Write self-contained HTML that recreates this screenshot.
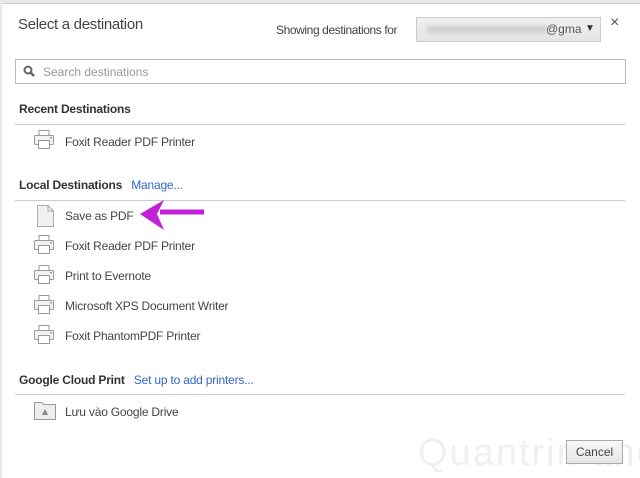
<!DOCTYPE html>
<html><head><style>
body{margin:0;width:640px;height:477px;overflow:hidden;background:#e8e8e8;font-family:"Liberation Sans",sans-serif;color:#333;position:relative}
.dlg{position:absolute;left:2px;top:3px;width:638px;height:474px;background:#fff;border-top:1px solid #ccc}
.t{position:absolute;white-space:nowrap}
.h{font-weight:bold;font-size:12px;color:#333;letter-spacing:-0.2px}
.it{font-size:12px;color:#444;letter-spacing:-0.2px}
.ln{position:absolute;left:15px;width:610px;height:1px;background:#ccc}
a{color:#3366cc}
</style></head><body>
<div class="dlg"></div>
<div class="t" style="left:18px;top:16px;font-size:15px;color:#444;letter-spacing:-0.3px">Select a destination</div>
<div class="t" style="left:276px;top:23px;font-size:12px;color:#444;letter-spacing:-0.4px">Showing destinations for</div>
<div style="position:absolute;left:416px;top:17px;width:183px;height:23px;border:1px solid #ccc;background:linear-gradient(#f0f0f0,#e4e4e4)"><div style="position:absolute;left:10px;top:8px;width:120px;height:7px;background:#ccc;filter:blur(2px)"></div><span class="t" style="left:129px;top:4px;font-size:12px;color:#555">@gma</span><span class="t" style="left:168px;top:5px;font-size:10px">▼</span></div>
<div class="t" style="left:610px;top:14px;font-size:16px;color:#555">×</div>
<div style="position:absolute;left:15px;top:59px;width:609px;height:23px;border:1px solid #bbb"><svg style="position:absolute;left:7px;top:5px" width="12" height="12"><circle cx="5" cy="5" r="3.5" stroke="#666" stroke-width="2" fill="none"/><path d="M7.5 7.5L11 11" stroke="#666" stroke-width="2.5"/></svg><span class="t" style="left:27px;top:5px;font-size:12px;color:#999">Search destinations</span></div>
<div class="t h" style="left:19px;top:102px">Recent Destinations</div>
<div class="ln" style="top:124px"></div>
<div class="t h" style="left:19px;top:178px">Local Destinations <a style="font-weight:normal;margin-left:6px">Manage...</a></div>
<div class="ln" style="top:200px"></div>
<div class="t h" style="left:19px;top:373px">Google Cloud Print <a style="font-weight:normal;margin-left:6px">Set up to add printers...</a></div>
<div class="ln" style="top:394px"></div>
<svg width="0" height="0" style="position:absolute"><defs><g id="pr"><rect x="5" y="0.5" width="10" height="5" fill="#fff" stroke="#999"/><rect x="0.5" y="5.5" width="19" height="9" rx="1" fill="#f3f3f3" stroke="#999"/><rect x="4.5" y="10.5" width="11" height="8" fill="#fff" stroke="#999"/><rect x="16" y="7" width="2" height="1.5" fill="#999"/></g></defs></svg>
<svg style="position:absolute;left:34px;top:130px" width="21" height="20"><use href="#pr"/></svg>
<div class="t it" style="left:65px;top:135px">Foxit Reader PDF Printer</div>
<svg style="position:absolute;left:37px;top:205px" width="18" height="22"><path d="M0.5 0.5H11L16.5 6V21.5H0.5Z" fill="#f0f0f0" stroke="#aaa"/><path d="M11 0.5V6H16.5" fill="none" stroke="#aaa"/></svg>
<div class="t it" style="left:65px;top:209px">Save as PDF</div>
<svg style="position:absolute;left:138px;top:198px" width="68" height="34"><path d="M66 14H22" stroke="#c21fd9" stroke-width="5"/><path d="M2 16L26 2L19 16L26 32Z" fill="#c21fd9"/></svg>
<svg style="position:absolute;left:34px;top:235px" width="21" height="20"><use href="#pr"/></svg>
<div class="t it" style="left:65px;top:239px">Foxit Reader PDF Printer</div>
<svg style="position:absolute;left:34px;top:265px" width="21" height="20"><use href="#pr"/></svg>
<div class="t it" style="left:65px;top:269px">Print to Evernote</div>
<svg style="position:absolute;left:34px;top:295px" width="21" height="20"><use href="#pr"/></svg>
<div class="t it" style="left:65px;top:299px">Microsoft XPS Document Writer</div>
<svg style="position:absolute;left:34px;top:325px" width="21" height="20"><use href="#pr"/></svg>
<div class="t it" style="left:65px;top:329px">Foxit PhantomPDF Printer</div>
<svg style="position:absolute;left:34px;top:400px" width="22" height="20"><path d="M0.5 2.5H8L10 4.5H21.5V19.5H0.5Z" fill="#eee" stroke="#999"/><path d="M8 15L11 9L14 15Z" fill="#888"/></svg>
<div class="t it" style="left:65px;top:405px">Lưu vào Google Drive</div>
<div class="t" style="left:418px;top:432px;font-size:38px;color:#f0f0f0;letter-spacing:2px">Quantrimang</div>
<div style="position:absolute;left:566px;top:440px;width:55px;height:22px;border:1px solid #aaa;background:linear-gradient(#f8f8f8,#e6e6e6);font-size:12px;text-align:center;line-height:22px;color:#444">Cancel</div>
</body></html>
